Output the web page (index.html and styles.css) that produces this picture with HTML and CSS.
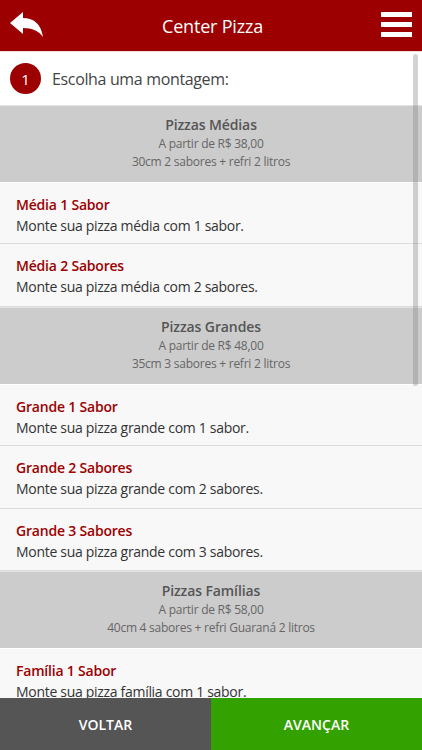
FILE: index.html
```
<!DOCTYPE html>
<html lang="pt-BR">
<head>
<meta charset="utf-8">
<title>Center Pizza</title>
<link rel="stylesheet" href="styles.css">
</head>
<body>
<div class="app">
  <header class="topbar">
    <button class="icon-btn back" aria-label="Voltar">
      <svg width="34" height="26" viewBox="0 0 34 26"><path d="M0 11 L13 0 L13 6 C24 6 31 12 33 25 C29 19 22 16 13 16 L13 22 Z" fill="#fff"/></svg>
    </button>
    <h1 class="title">Center Pizza</h1>
    <button class="icon-btn menu" aria-label="Menu">
      <span></span><span></span><span></span>
    </button>
  </header>
  <main class="content">
    <div class="step">
      <span class="step-num">1</span>
      <span class="step-text">Escolha uma montagem:</span>
    </div>
    <section class="group">
      <div class="group-title">Pizzas Médias</div>
      <div class="group-sub">A partir de R$ 38,00</div>
      <div class="group-sub">30cm 2 sabores + refri 2 litros</div>
    </section>
    <div class="item"><div class="item-title">Média 1 Sabor</div><div class="item-desc">Monte sua pizza média com 1 sabor.</div></div>
    <div class="item"><div class="item-title">Média 2 Sabores</div><div class="item-desc">Monte sua pizza média com 2 sabores.</div></div>
    <section class="group">
      <div class="group-title">Pizzas Grandes</div>
      <div class="group-sub">A partir de R$ 48,00</div>
      <div class="group-sub">35cm 3 sabores + refri 2 litros</div>
    </section>
    <div class="item"><div class="item-title">Grande 1 Sabor</div><div class="item-desc">Monte sua pizza grande com 1 sabor.</div></div>
    <div class="item"><div class="item-title">Grande 2 Sabores</div><div class="item-desc">Monte sua pizza grande com 2 sabores.</div></div>
    <div class="item"><div class="item-title">Grande 3 Sabores</div><div class="item-desc">Monte sua pizza grande com 3 sabores.</div></div>
    <section class="group">
      <div class="group-title">Pizzas Famílias</div>
      <div class="group-sub">A partir de R$ 58,00</div>
      <div class="group-sub">40cm 4 sabores + refri Guaraná 2 litros</div>
    </section>
    <div class="item"><div class="item-title">Família 1 Sabor</div><div class="item-desc">Monte sua pizza família com 1 sabor.</div></div>
    <div class="scrollbar"></div>
  </main>
  <footer class="actions">
    <button class="btn btn-back">VOLTAR</button>
    <button class="btn btn-next">AVANÇAR</button>
  </footer>
</div>
</body>
</html>
```
FILE: styles.css
```
* { box-sizing: border-box; }
html, body { margin: 0; padding: 0; }
body {
  font-family: "Open Sans", "Noto Sans", sans-serif;
  background: #fff;
  color: #333;
}
.app {
  width: 422px;
  height: 750px;
  display: flex;
  flex-direction: column;
  overflow: hidden;
}
.topbar {
  height: 52px;
  flex: none;
  background: #9c0000;
  border-bottom: 1px solid #f3dada;
  display: flex;
  align-items: center;
  justify-content: space-between;
  padding: 0 10px 0 10px;
}
.icon-btn {
  background: none;
  border: 0;
  padding: 0;
  display: flex;
  cursor: pointer;
}
.back { width: 34px; height: 26px; margin-top: -2px; }
.title {
  margin: 0;
  font-size: 18px;
  font-weight: 400;
  color: #fff;
  letter-spacing: -0.2px;
}
.menu {
  width: 31px;
  flex-direction: column;
  gap: 5px;
  margin-top: -2px;
}
.menu span {
  display: block;
  height: 5px;
  background: #fff;
}
.content {
  flex: 1;
  overflow: hidden;
  position: relative;
  background: #f8f8f8;
}
.step {
  height: 53px;
  background: #fff;
  display: flex;
  align-items: center;
  padding-left: 10px;
  gap: 11px;
}
.step-num {
  width: 31px;
  height: 31px;
  border-radius: 50%;
  background: #9c0000;
  color: #fff;
  font-size: 15px;
  display: flex;
  align-items: center;
  justify-content: center;
}
.step-text {
  font-size: 16px;
  color: #444;
  letter-spacing: -0.35px;
}
.group {
  height: 77px;
  background: #cccccc;
  border-top: 1px solid #e4e4e4;
  text-align: center;
  padding-top: 9px;
  color: #666;
}
.step + .group { height: 76.5px; }
.group-title {
  font-size: 14px;
  line-height: 20px;
  font-weight: 600;
  color: #555;
  letter-spacing: -0.1px;
}
.group-sub {
  font-size: 12px;
  line-height: 18px;
  letter-spacing: -0.25px;
}
.item {
  height: 62.6px;
  background: #f8f8f8;
  border-bottom: 1px solid #dcdcdc;
  padding: 11px 16px 0;
}
.group + .item { border-top: 1px solid #fff; }
.item-title {
  font-size: 14px;
  line-height: 21px;
  font-weight: 600;
  color: #9c0000;
  letter-spacing: -0.2px;
}
.item-desc {
  font-size: 14px;
  line-height: 21px;
  color: #333;
  letter-spacing: -0.3px;
}
.scrollbar {
  position: absolute;
  right: 4px;
  top: 2px;
  width: 5px;
  height: 332px;
  border-radius: 3px;
  background: rgba(128,128,128,0.35);
}
.actions {
  height: 52px;
  flex: none;
  display: flex;
}
.btn {
  flex: 1;
  border: 0;
  font-family: inherit;
  font-size: 14px;
  font-weight: 600;
  color: #fff;
  cursor: pointer;
}
.btn-back { background: #555555; }
.btn-next { background: #33a100; }
```
